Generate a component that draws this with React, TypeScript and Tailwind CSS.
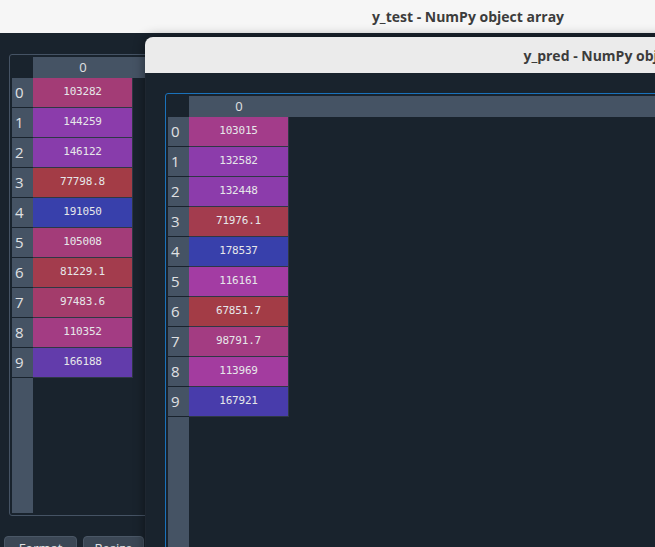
import React from "react";

type Cell = { v: number; label: string };

const backVals: Cell[] = [
  { v: 103282, label: "103282" },
  { v: 144259, label: "144259" },
  { v: 146122, label: "146122" },
  { v: 77798.8, label: "77798.8" },
  { v: 191050, label: "191050" },
  { v: 105008, label: "105008" },
  { v: 81229.1, label: "81229.1" },
  { v: 97483.6, label: "97483.6" },
  { v: 110352, label: "110352" },
  { v: 166188, label: "166188" },
];

const frontVals: Cell[] = [
  { v: 103015, label: "103015" },
  { v: 132582, label: "132582" },
  { v: 132448, label: "132448" },
  { v: 71976.1, label: "71976.1" },
  { v: 178537, label: "178537" },
  { v: 116161, label: "116161" },
  { v: 67851.7, label: "67851.7" },
  { v: 98791.7, label: "98791.7" },
  { v: 113969, label: "113969" },
  { v: 167921, label: "167921" },
];

function hsvToRgb(h: number, s: number, v: number): [number, number, number] {
  const i = Math.floor(h * 6);
  const f = h * 6 - i;
  const p = v * (1 - s);
  const q = v * (1 - f * s);
  const t = v * (1 - (1 - f) * s);
  let r = 0, g = 0, b = 0;
  switch (((i % 6) + 6) % 6) {
    case 0: r = v; g = t; b = p; break;
    case 1: r = q; g = v; b = p; break;
    case 2: r = p; g = v; b = t; break;
    case 3: r = p; g = q; b = v; break;
    case 4: r = t; g = p; b = v; break;
    default: r = v; g = p; b = q; break;
  }
  return [r * 255, g * 255, b * 255];
}

function cellColor(v: number, min: number, max: number): string {
  const hue = 0.66 + 0.33 * (max - v) / (max - min);
  const [r, g, b] = hsvToRgb(hue, 0.7, 1);
  const a = 0.6;
  const bg = [25, 35, 45];
  const mix = (c: number, d: number) => Math.round(c * a + d * (1 - a));
  return `rgb(${mix(r, bg[0])}, ${mix(g, bg[1])}, ${mix(b, bg[2])})`;
}

function Table({ cells }: { cells: Cell[] }) {
  const nums = cells.map((c) => c.v);
  const min = Math.min(...nums);
  const max = Math.max(...nums);
  return (
    <div className="flex flex-col h-full">
      <div className="flex h-[21px] shrink-0">
        <div className="w-[21px]" />
        <div className="w-[100px] bg-[#455364] flex items-center justify-center text-[13px] text-[#e0e1e3] font-['Open_Sans',sans-serif]">
          0
        </div>
        <div className="flex-1 bg-[#455364]" />
      </div>
      <div className="flex flex-1">
        <div className="w-[21px] bg-[#455364] flex flex-col">
          {cells.map((c, i) => (
            <div
              key={i}
              className="h-[30px] border-b border-[#19232d] flex items-center pl-[3px] text-[15px] text-[#e0e1e3] font-['Open_Sans',sans-serif]"
            >
              {i}
            </div>
          ))}
        </div>
        <div className="w-[100px] flex flex-col">
          {cells.map((c, i) => (
            <div
              key={i}
              className="h-[30px] border-b border-r border-[#2e3844] flex items-center justify-center text-[11px] tracking-[-0.2px] text-[#e6e7e9] font-['DejaVu_Sans_Mono',monospace]"
              style={{ backgroundColor: cellColor(c.v, min, max) }}
            >
              {c.label}
            </div>
          ))}
        </div>
        <div className="flex-1" />
      </div>
    </div>
  );
}

export default function App() {
  return (
    <div className="relative w-[655px] h-[547px] overflow-hidden bg-[#19232d]">
      {/* Back window */}
      <div className="absolute left-0 top-0 w-[936px] h-[547px] flex flex-col">
        <div className="h-[33px] bg-[#f6f6f6] flex items-center justify-center text-[14px] font-bold text-[#3c3c3c] font-['Open_Sans',sans-serif] shrink-0">
          y_test - NumPy object array
        </div>
        <div className="flex-1 bg-[#19232d] flex flex-col">
          <div className="ml-[9px] mt-[21px] w-[600px] h-[462px] border border-[#455364] rounded-[3px] p-[2px]">
            <Table cells={backVals} />
          </div>
          <div className="flex gap-[6px] ml-[4px] mt-[20px]">
            <div className="w-[73px] h-[26px] rounded-[4px] bg-[#3b4755] border border-[#4a5766] flex justify-center pt-[2px] text-[13px] text-[#e0e1e3] font-['Open_Sans',sans-serif]">
              Format
            </div>
            <div className="w-[61px] h-[26px] rounded-[4px] bg-[#3b4755] border border-[#4a5766] flex justify-center pt-[2px] text-[13px] text-[#e0e1e3] font-['Open_Sans',sans-serif]">
              Resize
            </div>
          </div>
        </div>
      </div>

      {/* Front window */}
      <div className="absolute left-[145px] top-[37px] w-[954px] h-[600px] rounded-tl-[8px] overflow-hidden flex flex-col shadow-[0_0_12px_rgba(0,0,0,0.45)]">
        <div className="h-[36px] bg-[#ebebeb] flex items-center justify-center text-[14px] font-bold text-[#3c3c3c] font-['Open_Sans',sans-serif] shrink-0">
          y_pred - NumPy object array
        </div>
        <div className="flex-1 bg-[#19232d] border-l border-[#1e2630]">
          <div className="ml-[19px] mt-[20px] w-[900px] h-[600px] border border-[#1a72bb] rounded-[3px] p-[2px]">
            <Table cells={frontVals} />
          </div>
        </div>
      </div>
    </div>
  );
}
